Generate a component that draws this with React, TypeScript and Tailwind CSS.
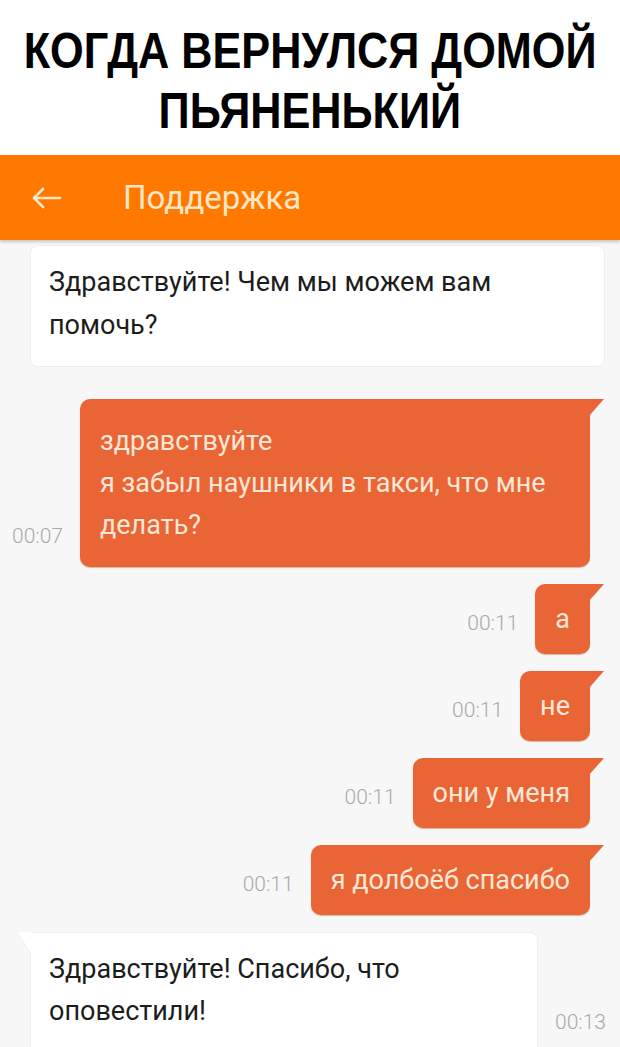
const ts = "text-[21px] font-light text-[#a9a9a9] leading-none";

const Outgoing = ({ time, children }: { time: string; children: React.ReactNode }) => (
  <div className="flex justify-end items-end gap-[17px] pr-[30px]">
    <span className={`${ts} mb-[20px]`}>{time}</span>
    <div className="relative bg-[#ea6536] text-[#fde7d6] rounded-b-[10px] rounded-tl-[10px] px-[20px] py-[14px] text-[27px] leading-[42px] shadow-[0_1px_1px_rgba(150,60,20,0.35)]">
      {children}
      <svg className="absolute top-0 -right-[15px]" width="16" height="17" viewBox="0 0 16 17">
        <path d="M0 0 H15 L0 17 Z" fill="#ea6536" />
      </svg>
    </div>
  </div>
);

export default function App() {
  return (
    <div className="w-[620px] h-[1047px] overflow-hidden bg-[#f7f7f7] font-['Roboto',sans-serif]">
      <div className="bg-white pt-[21px] pb-[14px] flex flex-col items-center font-['Liberation_Sans',sans-serif] font-bold text-[50px] leading-[60px] text-black">
        <span className="whitespace-nowrap scale-x-[0.865]">КОГДА ВЕРНУЛСЯ ДОМОЙ</span>
        <span className="whitespace-nowrap scale-x-[0.865]">ПЬЯНЕНЬКИЙ</span>
      </div>

      <header className="h-[85px] bg-[#ff7800] flex items-center shadow-[0_2px_3px_rgba(0,0,0,0.2)] relative z-10">
        <svg className="ml-[31px]" width="32" height="24" viewBox="0 0 32 24" fill="none" stroke="#ffe6c4" strokeWidth="2.6" strokeLinecap="round" strokeLinejoin="round">
          <path d="M29 12 H4 M12 3 L3 12 L12 21" />
        </svg>
        <span className="ml-[60px] text-[33px] text-[#ffe6c4]">Поддержка</span>
      </header>

      <div className="flex flex-col pt-[5px]">
        <div className="ml-[30px] mr-[15px] bg-white rounded-[8px] border border-[#eeeeee] pl-[18px] pr-4 pt-[15px] pb-[19px] text-[27px] leading-[43px] text-[#1c1c1c]">
          Здравствуйте! Чем мы можем вам
          <br />
          помочь?
        </div>

        <div className="flex flex-col gap-[17px] mt-[32px]">
          <Outgoing time="00:07">
            <div className="w-[470px] py-[7px]">
              здравствуйте
              <br />я забыл наушники в такси, что мне
              <br />
              делать?
            </div>
          </Outgoing>
          <Outgoing time="00:11">а</Outgoing>
          <Outgoing time="00:11">не</Outgoing>
          <Outgoing time="00:11">они у меня</Outgoing>
          <Outgoing time="00:11">я долбоёб спасибо</Outgoing>
        </div>

        <div className="flex items-start gap-[17px] mt-[17px] pl-[30px]">
          <div className="relative w-[508px] bg-white rounded-b-[8px] rounded-tr-[8px] border border-[#eeeeee] pl-[18px] pt-[15px] pb-[30px] text-[27px] leading-[42px] text-[#1c1c1c]">
            <svg className="absolute -top-px -left-[14px]" width="14" height="22" viewBox="0 0 14 22">
              <path d="M0 0 H14 V22 Z" fill="#ffffff" />
              <path d="M0 0 L14 22" stroke="#eeeeee" strokeWidth="1" />
            </svg>
            Здравствуйте! Спасибо, что
            <br />
            оповестили!
          </div>
          <span className={`${ts} mt-[80px]`}>00:13</span>
        </div>
      </div>
    </div>
  );
}
